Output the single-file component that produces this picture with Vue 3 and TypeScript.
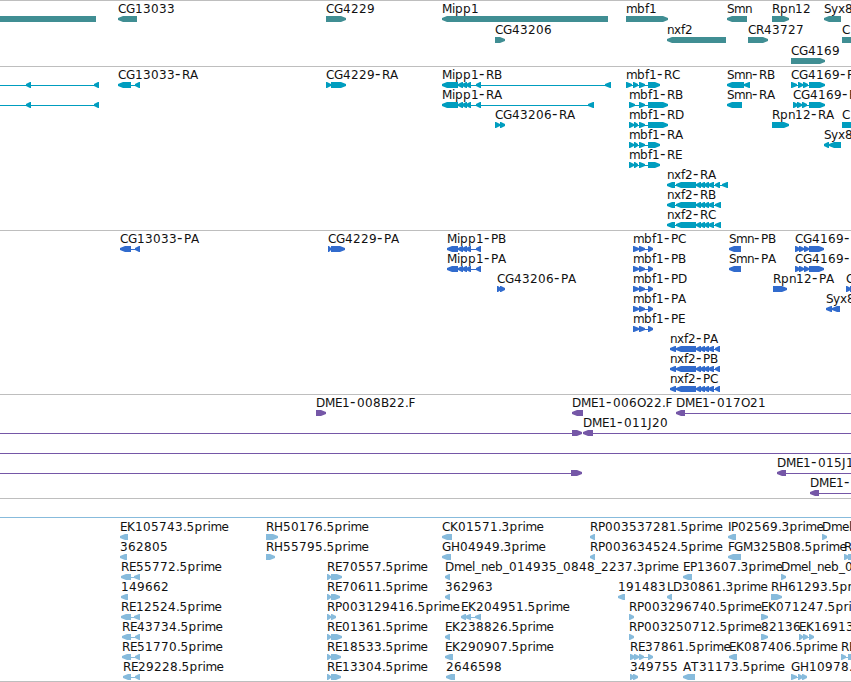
<script setup lang="ts">
type Block = [number, number];

interface Feature {
    row: number;
    dir: "<" | ">" | "-";
    label: string;
    blocks: Block[];
    // connector range, when it runs past the blocks
    from?: number;
    to?: number;
}

interface Track {
    name: string;
    height: number;
    rowHeight: number;
    features: Feature[];
}

function f(row: number, dir: Feature["dir"], label: string, blocks: Block[], from?: number, to?: number): Feature {
    return { row, dir, label, blocks, from, to };
}

const mipp: Block[] = [[458, 463], [462, 467], [466, 471], [476, 481]];
const nxf: Block[] = [[696, 701], [700, 705], [704, 709], [708, 714]];
const mbfShort: Block[] = [[629, 634], [634, 638], [639, 645], [648, 660]];
const mbfP: Block[] = [[633, 639], [639, 645], [648, 653]];
const cgP: Block[] = [[795, 800], [799, 804], [804, 809], [809, 824]];

const tracks: Track[] = [
    {
        name: "genes", height: 66, rowHeight: 21, features: [
            f(0, "<", "", [[-10, 96]]),
            f(0, "<", "CG13033", [[118, 137]]),
            f(0, ">", "CG4229", [[326, 346]]),
            f(0, "<", "Mipp1", [[442, 608]]),
            f(0, ">", "mbf1", [[626, 668]]),
            f(0, "<", "Smn", [[727, 747]]),
            f(0, ">", "Rpn12", [[772, 789]]),
            f(0, "<", "Syx8", [[824, 841]]),
            f(1, ">", "CG43206", [[495, 505]]),
            f(1, "<", "nxf2", [[667, 726]]),
            f(1, ">", "CR43727", [[748, 768]]),
            f(1, ">", "C", [[842, 870]]),
            f(2, ">", "CG4169", [[791, 825]]),
        ],
    },
    {
        name: "transcripts", height: 164, rowHeight: 20, features: [
            f(0, "<", "", [[26, 31], [94, 99]], -10),
            f(1, "<", "", [[26, 31], [94, 99]], -10),
            f(0, "<", "CG13033-RA", [[118, 131], [135, 140]]),
            f(0, ">", "CG4229-RA", [[326, 331], [331, 346]]),
            f(0, "<", "Mipp1-RB", [[442, 458], ...mipp, [605, 611]]),
            f(1, "<", "Mipp1-RA", [[442, 458], ...mipp, [588, 594]]),
            f(2, ">", "CG43206-RA", [[495, 500], [500, 505]]),
            f(0, ">", "mbf1-RC", [[626, 632], [633, 638], [639, 645], [648, 660]]),
            f(1, ">", "mbf1-RB", [[629, 635], [639, 645], [648, 668]]),
            f(2, ">", "mbf1-RD", [[629, 634], [634, 638], [639, 645], [648, 668]]),
            f(3, ">", "mbf1-RA", mbfShort),
            f(4, ">", "mbf1-RE", mbfShort),
            f(5, "<", "nxf2-RA", [[667, 675], [676, 696], ...nxf, [715, 720], [722, 728]]),
            f(6, "<", "nxf2-RB", [[667, 675], [676, 696], ...nxf, [715, 721]]),
            f(7, "<", "nxf2-RC", [[667, 675], [676, 696], ...nxf, [715, 721]]),
            f(0, "<", "Smn-RB", [[727, 744], [744, 750]]),
            f(1, "<", "Smn-RA", [[727, 742]]),
            f(2, ">", "Rpn12-RA", [[772, 789]]),
            f(0, ">", "CG4169-R", [[791, 797], [798, 803], [803, 808], [809, 825]]),
            f(1, ">", "CG4169-R", [[793, 798], [797, 802], [802, 807], [809, 825]]),
            f(2, ">", "C", [[842, 870]]),
            f(3, "<", "Syx8", [[824, 829], [829, 841]]),
        ],
    },
    {
        name: "proteins", height: 164, rowHeight: 20, features: [
            f(0, "<", "CG13033-PA", [[120, 131], [135, 140]]),
            f(0, ">", "CG4229-PA", [[328, 331], [331, 345]]),
            f(0, "<", "Mipp1-PB", [[447, 458], ...mipp]),
            f(1, "<", "Mipp1-PA", [[447, 458], ...mipp]),
            f(2, ">", "CG43206-PA", [[497, 501], [500, 505]]),
            ...["C", "B", "D", "A", "E"].map((s, i) => f(i, ">", "mbf1-P" + s, mbfP)),
            ...["A", "B", "C"].map((s, i) => f(5 + i, "<", "nxf2-P" + s, [[670, 676], [676, 696], ...nxf, [715, 720]])),
            f(0, "<", "Smn-PB", [[729, 741]]),
            f(1, "<", "Smn-PA", [[729, 741]]),
            f(2, ">", "Rpn12-PA", [[773, 787]]),
            f(0, ">", "CG4169-", cgP),
            f(1, ">", "CG4169-", cgP),
            f(2, ">", "C", [[846, 851], [850, 870]]),
            f(3, "<", "Syx8", [[826, 832], [832, 840]]),
        ],
    },
    {
        name: "clones", height: 104, rowHeight: 20, features: [
            f(0, ">", "DME1-008B22.F", [[316, 326]]),
            f(0, "<", "DME1-006O22.F", [[572, 583]]),
            f(0, "<", "DME1-017O21", [[676, 685]], 678, 860),
            f(1, ">", "", [[572, 582]], -10),
            f(1, "<", "DME1-011J20", [[583, 593]], 585, 860),
            f(2, "-", "", [], -10, 860),
            f(3, ">", "", [[571, 582]], -10),
            f(3, "<", "DME1-015J1", [[777, 786]], 779, 860),
            f(4, "<", "DME1-", [[810, 819]], 812, 860),
        ],
    },
    {
        name: "ests", height: 183, rowHeight: 20, features: [
            f(0, "-", "", [], -10, 860),
            f(1, "<", "EK105743.5prime", [[120, 128]]),
            f(2, "<", "362805", [[120, 127]]),
            f(3, "<", "RE55772.5prime", [[121, 131], [134, 140]]),
            f(4, "<", "149662", [[121, 128]]),
            f(5, "<", "RE12524.5prime", [[121, 131], [134, 140]]),
            f(6, "<", "RE43734.5prime", [[122, 131], [135, 140]]),
            f(7, "<", "RE51770.5prime", [[122, 131], [135, 140]]),
            f(8, "<", "RE29228.5prime", [[123, 131], [135, 140]]),
            f(1, ">", "RH50176.5prime", [[266, 278]]),
            f(2, ">", "RH55795.5prime", [[266, 275]]),
            f(3, ">", "RE70557.5prime", [[327, 331], [331, 342]]),
            f(4, ">", "RE70611.5prime", [[327, 331], [331, 340]]),
            f(5, ">", "RP003129416.5prime", [[327, 331], [331, 336]]),
            f(6, ">", "RE01361.5prime", [[327, 331], [331, 342]]),
            f(7, ">", "RE18533.5prime", [[327, 331], [331, 341]]),
            f(8, ">", "RE13304.5prime", [[327, 331], [331, 341]]),
            f(1, "<", "CK01571.3prime", [[442, 452]]),
            f(2, "<", "GH04949.3prime", [[442, 451]]),
            f(3, "<", "Dmel_neb_014935_0848_2237.3prime", [[445, 450]]),
            f(4, "<", "362963", [[445, 450]]),
            f(5, "<", "EK204951.5prime", [[461, 466], [465, 471], [475, 481]]),
            f(6, "<", "EK238826.5prime", [[445, 450]]),
            f(7, "<", "EK290907.5prime", [[445, 453]]),
            f(8, "<", "2646598", [[446, 455]]),
            f(1, "<", "RP003537281.5prime", [[590, 595]]),
            f(2, "<", "RP003634524.5prime", [[590, 595]]),
            f(4, "<", "191483", [[618, 625]]),
            f(5, ">", "RP003296740.5prime", [[629, 634]]),
            f(6, ">", "RP003250712.5prime", [[629, 634]]),
            f(7, ">", "RE37861.5prime", [[630, 635], [634, 639], [639, 644], [648, 653]]),
            f(8, ">", "349755", [[630, 634], [633, 638]]),
            f(3, "<", "EP13607.3prime", [[683, 692]]),
            f(4, "<", "LD30861.3prime", [[667, 672]]),
            f(8, "<", "AT31173.5prime", [[683, 695]]),
            f(1, "<", "IP02569.3prime", [[728, 736]]),
            f(2, "<", "FGM325B08.5prime", [[728, 741]]),
            f(7, "<", "EK087406.5prime", [[729, 737]]),
            f(5, ">", "EK071247.5prime", [[761, 768]]),
            f(6, ">", "82136", [[761, 768]]),
            f(4, ">", "RH61293.5prime", [[771, 782]]),
            f(3, ">", "Dmel_neb_0", [[781, 786]]),
            f(8, ">", "GH10978.", [[791, 797], [798, 803], [802, 807]]),
            f(6, ">", "EK16913", [[799, 803], [803, 808], [809, 814]]),
            f(1, ">", "Dmel", [[822, 827]]),
            f(2, ">", "R", [[844, 849], [848, 856]]),
            f(7, ">", "RE", [[841, 846], [848, 856]]),
        ],
    },
];

// whole-pixel advances, anything missing is 8 wide
const advance: Record<string, number> = {
    G: 9, D: 9, O: 9, H: 9, M: 10, E: 7, P: 7, S: 7, F: 6, L: 6, J: 4, I: 3,
    m: 11, n: 7, x: 7, y: 7, e: 7, r: 5, f: 4, i: 3, l: 3, "-": 7, _: 6, ".": 3.5,
};

// splits a label around its dash, which is set larger than the rest
function runs(ft: Feature) {
    let x = ft.blocks[0][0];
    return ft.label.split(/(-)/).filter((s) => s).map((text) => {
        const xs = [...text].map((c) => {
            const cur = x;
            x += advance[c] ?? 8;
            return cur;
        });
        return { text, x: xs.join(" "), dash: text == "-" };
    });
}

function top(t: Track, ft: Feature) {
    return ft.row * t.rowHeight + 16;
}

function line(ft: Feature) {
    const x1 = ft.from ?? ft.blocks[0][0] + 2;
    const x2 = ft.to ?? ft.blocks[ft.blocks.length - 1][1] - 2;
    return { x: x1, width: x2 - x1 };
}

function arrow(dir: string, [a, b]: Block, y: number) {
    const head = Math.min(5, b - a - 1);
    if (dir == "<") {
        return `M${a} ${y + 2}L${a + head} ${y}H${b}V${y + 6}H${a + head}L${a} ${y + 4}Z`;
    }
    return `M${b} ${y + 2}L${b - head} ${y}H${a}V${y + 6}H${b - head}L${b} ${y + 4}Z`;
}
</script>

<template>
    <div class="browser">
        <section v-for="t in tracks" :key="t.name" class="track" :class="t.name">
            <svg width="851" :height="t.height" :viewBox="`0 0 851 ${t.height}`">
                <g v-for="(ft, i) in t.features" :key="i">
                    <rect v-bind="line(ft)" :y="top(t, ft) + 3" height="1" />
                    <path v-for="(b, j) in ft.blocks" :key="j" :d="arrow(ft.dir, b, top(t, ft))" />
                    <text v-if="ft.label" :y="top(t, ft) - 3"><tspan v-for="(r, j) in runs(ft)" :key="j" :x="r.x" :class="{ dash: r.dash }">{{ r.text }}</tspan></text>
                </g>
            </svg>
        </section>
    </div>
</template>

<style>
body {
    background: #fff;
    overflow: hidden;
}
</style>

<style scoped>
.browser {
    width: 851px;
    height: 682px;
    box-sizing: border-box;
    border-bottom: 1px solid #bebebe;
    overflow: hidden;
}

.track {
    box-shadow: inset 0 1px #bebebe;
}

.track svg {
    display: block;
    overflow: hidden;
}

.genes {
    fill: #408e93;
}

.transcripts {
    fill: #009dbf;
}

.proteins {
    fill: #316bcd;
}

.clones {
    fill: #7557a7;
}

.ests {
    fill: #87bbdc;
}

text {
    fill: #111;
    font: 12px "DejaVu Sans", sans-serif;
}

.dash {
    font-size: 15px;
}
</style>
